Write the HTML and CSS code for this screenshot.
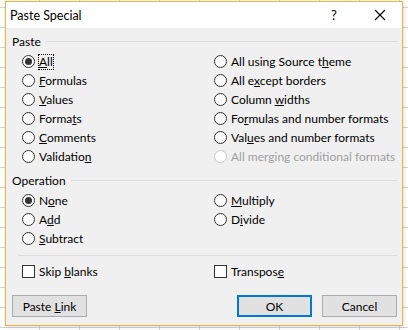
FILE: index.html
```html
<!DOCTYPE html>
<html lang="en">
<head>
    <meta charset="UTF-8">
    <title>Paste Special</title>
    <link rel="stylesheet" href="styles.css">
</head>
<body>

    <div class="dialog">
        <div class="titlebar">
            <span class="title">Paste Special</span>
            <span class="help">?</span>
            <svg class="close" width="12" height="12" viewBox="0 0 12 12">
                <path d="M1 1 L11 11 M11 1 L1 11" stroke="#000" stroke-width="1.1" fill="none"/>
            </svg>
        </div>

        <div class="content">
            <div class="group-head first">
                <span>Paste</span>
                <div class="rule"></div>
            </div>
            <div class="options">
                <label class="opt"><span class="radio on"></span><span class="focus"><u>A</u>ll</span></label>
                <label class="opt"><span class="radio"></span><span>All using Source t<u>h</u>eme</span></label>
                <label class="opt"><span class="radio"></span><span><u>F</u>ormulas</span></label>
                <label class="opt"><span class="radio"></span><span>All e<u>x</u>cept borders</span></label>
                <label class="opt"><span class="radio"></span><span><u>V</u>alues</span></label>
                <label class="opt"><span class="radio"></span><span>Column <u>w</u>idths</span></label>
                <label class="opt"><span class="radio"></span><span>Forma<u>t</u>s</span></label>
                <label class="opt"><span class="radio"></span><span>Fo<u>r</u>mulas and number formats</span></label>
                <label class="opt"><span class="radio"></span><span><u>C</u>omments</span></label>
                <label class="opt"><span class="radio"></span><span>Val<u>u</u>es and number formats</span></label>
                <label class="opt"><span class="radio"></span><span>Validatio<u>n</u></span></label>
                <label class="opt disabled"><span class="radio"></span><span>All merging conditional formats</span></label>
            </div>

            <div class="group-head">
                <span>Operation</span>
                <div class="rule"></div>
            </div>
            <div class="options">
                <label class="opt"><span class="radio on"></span><span>N<u>o</u>ne</span></label>
                <label class="opt"><span class="radio"></span><span><u>M</u>ultiply</span></label>
                <label class="opt"><span class="radio"></span><span>A<u>d</u>d</span></label>
                <label class="opt"><span class="radio"></span><span>D<u>i</u>vide</span></label>
                <label class="opt"><span class="radio"></span><span><u>S</u>ubtract</span></label>
            </div>

            <div class="separator"></div>

            <div class="options checks">
                <label class="opt"><span class="check"></span><span>Skip <u>b</u>lanks</span></label>
                <label class="opt"><span class="check"></span><span>Transpos<u>e</u></span></label>
            </div>

            <div class="buttons">
                <button>Paste <u>L</u>ink</button>
                <div class="spacer"></div>
                <button class="default">OK</button>
                <button>Cancel</button>
            </div>
        </div>
    </div>

</body>
</html>
```

FILE: styles.css
```css
* {
    margin: 0;
    padding: 0;
    box-sizing: border-box;
}
body {
    font-family: Lato, "Noto Sans", sans-serif;
    font-size: 12px;
    color: #000;
    width: 408px;
    height: 330px;
    overflow: hidden;
    background-color: #fff;
    background-image:
        repeating-linear-gradient(to right, transparent 0, transparent 39px, #d4d4d4 39px, #d4d4d4 40px),
        repeating-linear-gradient(to bottom, transparent 0, transparent 7px, #d4d4d4 7px, #d4d4d4 8px, transparent 8px, transparent 20px);
    padding: 1px 0 0 5px;
}
.dialog {
    width: 398px;
    height: 325px;
    border: 1px solid #f2b53a;
    background-color: #f0f0f0;
    box-shadow: 1px 1px 4px rgba(0, 0, 0, 0.15);
}
.titlebar {
    height: 26px;
    background-color: #fff;
    display: flex;
    align-items: center;
    padding-left: 4px;
}
.title {
    flex: 1;
    font-size: 12.5px;
}
.help {
    width: 16px;
    margin-right: 27px;
    font-size: 13px;
}
.close {
    margin-right: 16px;
}
.content {
    padding: 0 5px 0 6px;
}
.group-head {
    display: flex;
    align-items: center;
    height: 16px;
    margin-top: 6px;
}
.group-head.first {
    margin-top: 5px;
}
.rule {
    flex: 1;
    height: 1px;
    background-color: #dcdcdc;
    margin-left: 5px;
}
.options {
    display: grid;
    grid-template-columns: 192px 1fr;
    grid-auto-rows: 19px;
    padding-left: 10px;
    margin-top: 3px;
}
.opt {
    display: flex;
    align-items: center;
    white-space: nowrap;
}
.opt.disabled {
    color: #a0a0a0;
}
.radio {
    width: 13px;
    height: 13px;
    border: 1px solid #333;
    border-radius: 50%;
    background-color: #fff;
    margin-right: 4px;
    display: flex;
    align-items: center;
    justify-content: center;
}
.radio.on::after {
    content: "";
    width: 7px;
    height: 7px;
    border-radius: 50%;
    background-color: #333;
}
.disabled .radio {
    border-color: #c8c8c8;
}
.focus {
    outline: 1px dotted #000;
    line-height: 14px;
}
.separator {
    height: 1px;
    background-color: #dcdcdc;
    margin: 7px 0 0 6px;
}
.checks {
    margin-top: 6px;
}
.check {
    width: 13px;
    height: 13px;
    border: 1px solid #333;
    background-color: #fff;
    margin-right: 4px;
}
.buttons {
    display: flex;
    gap: 10px;
    margin-top: 14px;
}
.spacer {
    flex: 1;
}
button {
    width: 75px;
    height: 22px;
    font-family: inherit;
    font-size: 12px;
    background-color: #e1e1e1;
    border: 1px solid #adadad;
    color: #000;
}
button.default {
    border: 2px solid #0078d7;
}
```
